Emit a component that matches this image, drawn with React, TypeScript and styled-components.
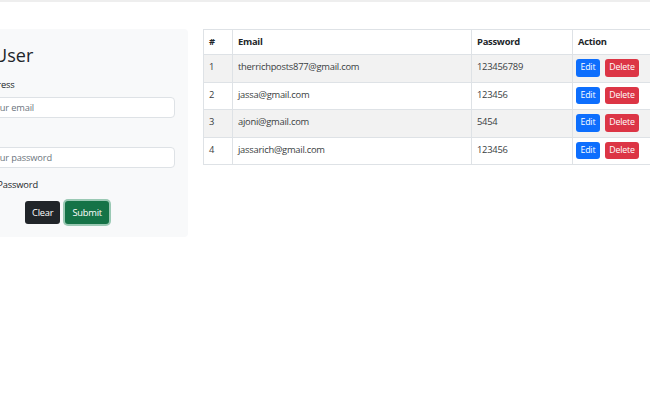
import React from "react";
import styled, { createGlobalStyle } from "styled-components";

const FONT = `"Open Sans", "Noto Sans", "Liberation Sans", sans-serif`;

const GlobalStyle = createGlobalStyle`
	html, body {
		margin: 0;
		padding: 0;
		background: #ffffff;
		overflow: hidden;
	}
	body {
		font-family: ${FONT};
		font-size: 10px;
		color: #212529;
	}
	* {
		box-sizing: border-box;
	}
`;

const Page = styled.div`
	width: 650px;
	height: 400px;
	overflow: hidden;
`;

const TopBar = styled.div`
	height: 1px;
	border-bottom: 2px solid #eeeeee;
`;

const Main = styled.main`
	display: flex;
	align-items: flex-start;
	gap: 15px;
	padding-top: 27px;
`;

const Card = styled.section`
	flex: none;
	width: 245px;
	margin-left: -57px;
	height: 208px;
	padding: 15px 13px;
	background: #f8f9fa;
	border-radius: 4px;
`;

const Title = styled.h3`
	margin: 0 0 12px;
	font-size: 18px;
	font-weight: 500;
	line-height: 22px;
	color: #212529;
`;

const Field = styled.div`
	margin-bottom: 10px;
`;

const Label = styled.label`
	display: block;
	margin-bottom: 5px;
	font-size: 9.3px;
	letter-spacing: -0.15px;
	line-height: 14px;
	color: #212529;
`;

const Input = styled.input`
	display: block;
	width: 100%;
	height: 21px;
	padding: 0 8px;
	font-family: ${FONT};
	font-size: 9.3px;
	letter-spacing: -0.15px;
	color: #212529;
	background: #ffffff;
	border: 1px solid #dee2e6;
	border-radius: 4px;
	outline: none;
	&::placeholder {
		color: #6c757d;
	}
`;

const CheckRow = styled.div`
	display: flex;
	align-items: center;
	gap: 5px;
	margin-top: 10px;
	font-size: 9.3px;
	letter-spacing: -0.15px;
	line-height: 14px;
`;

const Checkbox = styled.input`
	margin: 0;
	width: 11px;
	height: 11px;
`;

const ButtonRow = styled.div`
	display: flex;
	justify-content: center;
	gap: 5px;
	margin-top: 9px;
	padding-left: 3px;
`;

const Button = styled.button<{ $variant: "dark" | "success" | "primary" | "danger"; $small?: boolean }>`
	font-family: ${FONT};
	font-size: ${(p) => (p.$small ? "8.8px" : "9.3px")};
	letter-spacing: -0.2px;
	line-height: 1;
	color: #ffffff;
	height: ${(p) => (p.$small ? "17.5px" : "22.5px")};
	padding: ${(p) => (p.$small ? "0 3.5px" : "0 6px")};
	border: 1px solid transparent;
	border-radius: 3px;
	cursor: pointer;
	background: ${(p) =>
		({
			dark: "#212529",
			success: "#157347",
			primary: "#0d6efd",
			danger: "#dc3545",
		})[p.$variant]};
	box-shadow: ${(p) =>
		p.$variant === "success" ? "0 0 0 2px rgba(60, 153, 110, 0.5)" : "none"};
`;

const Table = styled.table`
	flex: none;
	width: 460px;
	table-layout: fixed;
	border-collapse: collapse;
	font-size: 9.4px;
	letter-spacing: -0.25px;
	line-height: 14px;
	color: #212529;
`;

const Th = styled.th`
	text-align: left;
	font-weight: 700;
	padding: 5px 5px;
	border: 1px solid #dee2e6;
	vertical-align: top;
`;

const Row = styled.tr<{ $striped: boolean }>`
	background: ${(p) => (p.$striped ? "#f2f2f2" : "#ffffff")};
`;

const Td = styled.td`
	padding: 5px 5px;
	border: 1px solid #dee2e6;
	vertical-align: top;
	color: #3a3e42;
`;

const Actions = styled.div`
	display: flex;
	gap: 5px;
	margin: -1px 0 0 -2px;
`;

const users = [
	{ id: 1, email: "therrichposts877@gmail.com", password: "123456789" },
	{ id: 2, email: "jassa@gmail.com", password: "123456" },
	{ id: 3, email: "ajoni@gmail.com", password: "5454" },
	{ id: 4, email: "jassarich@gmail.com", password: "123456" },
];

const App = () => {
	return (
		<Page>
			<GlobalStyle />
			<TopBar />
			<Main>
				<Card>
					<Title>Add User</Title>
					<Field>
						<Label>Email address</Label>
						<Input type="email" placeholder="Enter your email" />
					</Field>
					<Field>
						<Label>Password</Label>
						<Input type="password" placeholder="Enter your password" />
					</Field>
					<CheckRow>
						<Checkbox type="checkbox" />
						<span>Show Password</span>
					</CheckRow>
					<ButtonRow>
						<Button $variant="dark">Clear</Button>
						<Button $variant="success">Submit</Button>
					</ButtonRow>
				</Card>
				<Table>
					<colgroup>
						<col style={{ width: 29 }} />
						<col style={{ width: 239 }} />
						<col style={{ width: 101 }} />
						<col />
					</colgroup>
					<thead>
						<tr>
							<Th>#</Th>
							<Th>Email</Th>
							<Th>Password</Th>
							<Th>Action</Th>
						</tr>
					</thead>
					<tbody>
						{users.map((u, i) => (
							<Row key={u.id} $striped={i % 2 === 0}>
								<Td>{u.id}</Td>
								<Td>{u.email}</Td>
								<Td>{u.password}</Td>
								<Td>
									<Actions>
										<Button $variant="primary" $small>
											Edit
										</Button>
										<Button $variant="danger" $small>
											Delete
										</Button>
									</Actions>
								</Td>
							</Row>
						))}
					</tbody>
				</Table>
			</Main>
		</Page>
	);
};

export default App;
